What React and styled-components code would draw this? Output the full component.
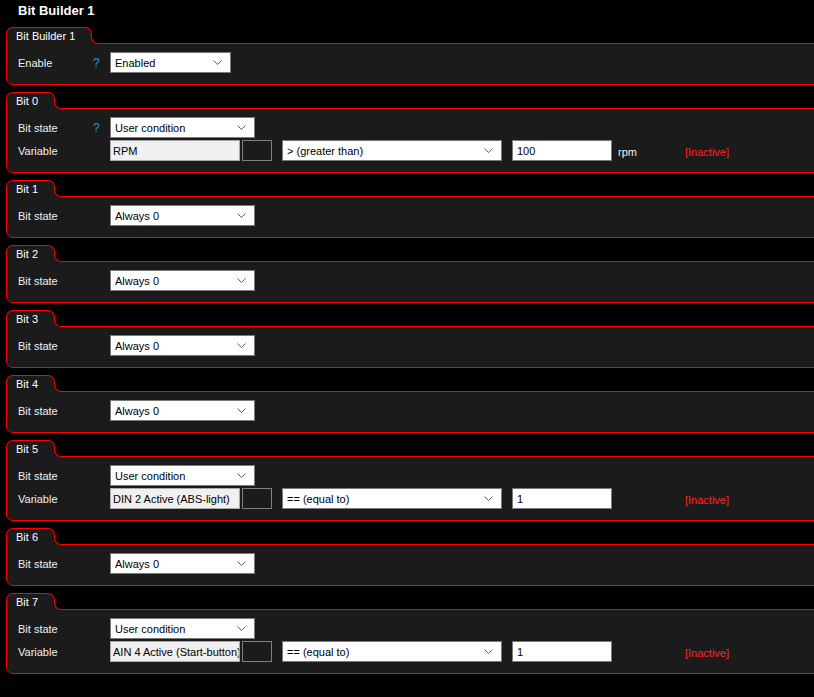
import React from 'react';
import styled, { createGlobalStyle } from 'styled-components';

const GlobalStyle = createGlobalStyle`
  html, body {
    margin: 0;
    padding: 0;
    background: #000;
    overflow: hidden;
  }
  body {
    font-family: "Liberation Sans", Arial, sans-serif;
    font-size: 11px;
    color: #f0f0f0;
  }
`;

const Page = styled.div`
  width: 814px;
  height: 697px;
  overflow: hidden;
  padding-left: 6px;
  box-sizing: border-box;
  display: flex;
  flex-direction: column;
  gap: 7px;
`;

const Title = styled.div`
  height: 20px;
  line-height: 21px;
  padding-left: 12px;
  font-size: 13px;
  font-weight: bold;
  color: #fff;
`;

const Panel = styled.section`
  display: flex;
  flex-direction: column;
  width: calc(100% + 30px);
`;

// tab with a rounded top and a concave fillet into the header line
const Tab = styled.div`
  position: relative;
  z-index: 1;
  align-self: flex-start;
  box-sizing: border-box;
  height: 17px;
  margin-bottom: -1px;
  padding: 0 16px 0 9px;
  line-height: 16px;
  border: 1px solid #ff0000;
  border-bottom: 0;
  border-radius: 7px 7px 0 0;
  background: #1b1b1b;
  color: #fff;

  &::before,
  &::after {
    content: '';
    position: absolute;
    left: 100%;
    bottom: 0;
    width: 8px;
    height: 8px;
    box-sizing: border-box;
  }
  &::before {
    background: #1b1b1b;
  }
  &::after {
    background: #000;
    border-left: 1px solid #ff0000;
    border-bottom: 1px solid #ff0000;
    border-bottom-left-radius: 7px;
  }
`;

const Body = styled.div`
  display: flex;
  flex-direction: column;
  gap: 2px;
  padding: 8px 0 11px 11px;
  border: 1px solid #ff0000;
  border-radius: 0 0 0 7px;
  background: #1b1b1b;
`;

const Row = styled.div`
  display: flex;
  align-items: center;
  height: 21px;
`;

const Label = styled.div`
  width: 72px;
  flex: none;
  color: #f0f0f0;
`;

const Help = styled.div`
  width: 20px;
  flex: none;
  padding-left: 3px;
  box-sizing: border-box;
  font-size: 12px;
  color: #1e9be9;
`;

const Combo = styled.div`
  display: flex;
  align-items: center;
  justify-content: space-between;
  box-sizing: border-box;
  width: ${({ $w }) => $w}px;
  height: 21px;
  padding: 0 8px 0 4px;
  margin-left: ${({ $ml }) => $ml || 0}px;
  background: #fff;
  border: 1px solid #7a7a7a;
  color: #000;
  flex: none;
`;

const TextBox = styled.div`
  box-sizing: border-box;
  width: ${({ $w }) => $w}px;
  height: 21px;
  line-height: 20px;
  padding: 0 ${({ $pad }) => $pad || 2}px;
  margin-left: ${({ $ml }) => $ml || 0}px;
  background: ${({ $readOnly }) => ($readOnly ? '#f0f0f0' : '#fff')};
  border: 1px solid ${({ $readOnly }) => ($readOnly ? '#a9a9a9' : '#7a7a7a')};
  color: #000;
  white-space: nowrap;
  overflow: hidden;
  flex: none;
`;

const Swatch = styled.div`
  box-sizing: border-box;
  width: 30px;
  height: 21px;
  margin-left: 2px;
  border: 1px solid #808080;
  background: #1b1b1b;
  flex: none;
`;

const Unit = styled.div`
  width: 67px;
  margin-left: 6px;
  padding-top: 3px;
  color: #f0f0f0;
  flex: none;
`;

const Status = styled.div`
  padding-top: 2px;
  color: #ff2323;
`;

const Chevron = () => (
  <svg width="9" height="5" viewBox="0 0 9 5">
    <polyline points="0.5,0.5 4.5,4.5 8.5,0.5" fill="none" stroke="#5a5a5a" strokeWidth="1" />
  </svg>
);

const Select = ({ value, width, ml }) => (
  <Combo $w={width} $ml={ml}>
    <span>{value}</span>
    <Chevron />
  </Combo>
);

const bits = [
  { name: 'Bit 0', state: 'User condition', help: true, cond: { variable: 'RPM', op: '> (greater than)', value: '100', unit: 'rpm' } },
  { name: 'Bit 1', state: 'Always 0' },
  { name: 'Bit 2', state: 'Always 0' },
  { name: 'Bit 3', state: 'Always 0' },
  { name: 'Bit 4', state: 'Always 0' },
  { name: 'Bit 5', state: 'User condition', cond: { variable: 'DIN 2 Active (ABS-light)', op: '== (equal to)', value: '1', unit: '' } },
  { name: 'Bit 6', state: 'Always 0' },
  { name: 'Bit 7', state: 'User condition', cond: { variable: 'AIN 4 Active (Start-button)', op: '== (equal to)', value: '1', unit: '' } },
];

const BitPanel = ({ bit }) => (
  <Panel>
    <Tab>{bit.name}</Tab>
    <Body>
      <Row>
        <Label>Bit state</Label>
        <Help>{bit.help ? '?' : ''}</Help>
        <Select value={bit.state} width={145} />
      </Row>
      {bit.cond && (
        <Row>
          <Label>Variable</Label>
          <Help />
          <TextBox $w={130} $readOnly>{bit.cond.variable}</TextBox>
          <Swatch />
          <Select value={bit.cond.op} width={220} ml={10} />
          <TextBox $w={100} $ml={10} $pad={4}>{bit.cond.value}</TextBox>
          <Unit>{bit.cond.unit}</Unit>
          <Status>[Inactive]</Status>
        </Row>
      )}
    </Body>
  </Panel>
);

export default function App() {
  return (
    <>
      <GlobalStyle />
      <Page>
        <Title>Bit Builder 1</Title>
        <Panel>
          <Tab>Bit Builder 1</Tab>
          <Body>
            <Row>
              <Label>Enable</Label>
              <Help>?</Help>
              <Select value="Enabled" width={121} />
            </Row>
          </Body>
        </Panel>
        {bits.map((bit) => (
          <BitPanel key={bit.name} bit={bit} />
        ))}
      </Page>
    </>
  );
}
